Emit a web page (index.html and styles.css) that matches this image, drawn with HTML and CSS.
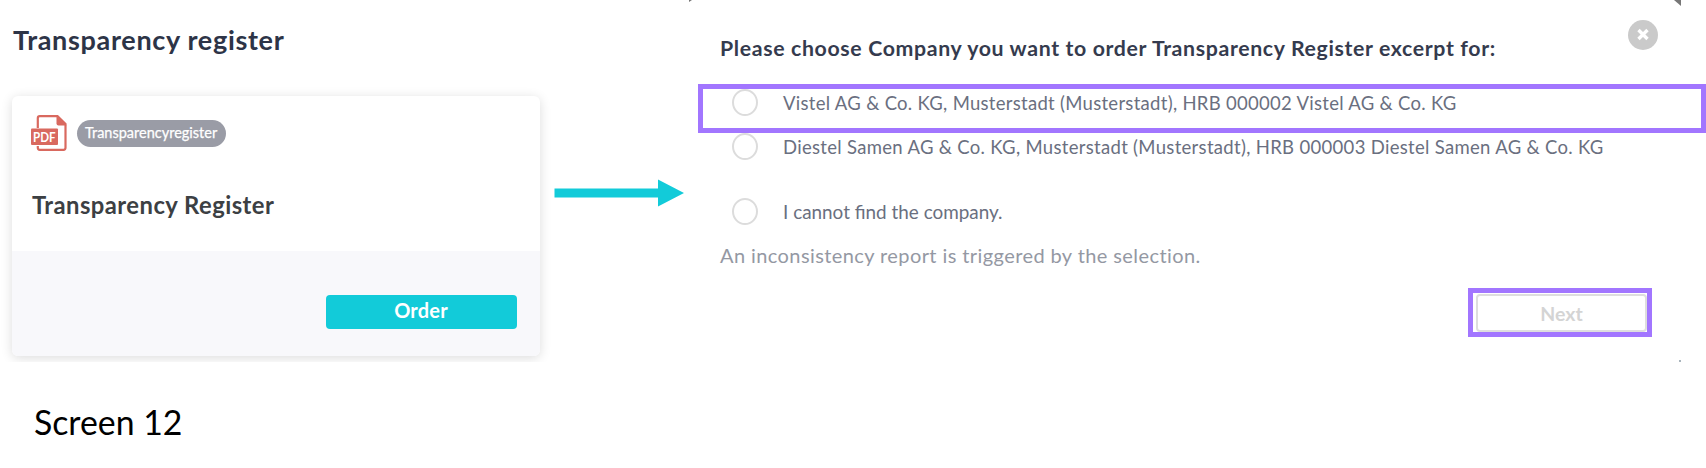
FILE: index.html
```html
<!DOCTYPE html>
<html lang="en">
<head>
<meta charset="utf-8">
<title>Transparency register</title>
<link rel="stylesheet" href="styles.css">
</head>
<body>
<main class="board">
  <section class="register">
    <h1 class="register-title">Transparency register</h1>
    <div class="card-clip">
      <article class="card">
        <div class="card-body">
          <div class="card-tags">
            <svg class="pdf-icon" viewBox="0 0 36 36">
              <path d="M6.800 13V3.200Q6.800 1.200 8.800 1.200H26.500L34.500 9V32.800Q34.500 34.800 32.500 34.800H8.800Q6.800 34.800 6.800 32.800V31" fill="none" stroke="#d9695f" stroke-width="2.200"/>
              <path d="M25.500 1V8.500Q25.500 10.500 27.500 10.500H35.500Z" fill="#d9695f"/>
              <rect x="0" y="13.500" width="27" height="16.500" rx="1" fill="#d9695f"/>
              <text class="pdf-text" x="2" y="26.500" textLength="22.500" lengthAdjust="spacingAndGlyphs">PDF</text>
            </svg>
            <span class="badge">Transparencyregister</span>
          </div>
          <h2 class="card-title">Transparency Register</h2>
        </div>
        <div class="card-footer"><button class="order">Order</button></div>
      </article>
    </div>
    <p class="caption">Screen 12</p>
  </section>
  <svg class="arrow" viewBox="0 0 130 28"><path d="M0.500 9.500H104V0.500L130 14L104 27.500V18.500H0.500Z" fill="#12cbd9"/></svg>
  <section class="dialog">
    <i class="corner corner-left"></i><i class="corner corner-right"></i><i class="corner corner-bottom"></i>
    <header class="dialog-head">
      <h2 class="dialog-title">Please choose Company you want to order Transparency Register excerpt for:</h2>
      <svg class="close" viewBox="0 0 30 30"><circle cx="15" cy="15" r="15" fill="#cacaca"/><path d="M10.500 10L19.500 19M19.500 10L10.500 19" stroke="#fff" stroke-width="3.400"/></svg>
    </header>
    <label class="option highlighted"><i class="radio"></i><span>Vistel AG &amp; Co. KG, Musterstadt (Musterstadt), HRB 000002 Vistel AG &amp; Co. KG</span></label>
    <label class="option second"><i class="radio"></i><span>Diestel Samen AG &amp; Co. KG, Musterstadt (Musterstadt), HRB 000003 Diestel Samen AG &amp; Co. KG</span></label>
    <label class="option third"><i class="radio"></i><span>I cannot find the company.</span></label>
    <p class="note">An inconsistency report is triggered by the selection.</p>
    <div class="next-frame"><button class="next">Next</button></div>
  </section>
</main>
</body>
</html>
```
FILE: styles.css
```css
* { box-sizing: border-box; }
body { margin: 0; background: #fff; font-family: Lato, "Noto Sans", sans-serif; }
h1, h2, p { margin: 0; }
button { font-family: inherit; padding: 0; }
.board { display: flex; width: 1706px; height: 468px; overflow: hidden; }
.register { width: 554px; }
.register-title { height: 82px; padding: 24px 0 0 13px; font-size: 27px; letter-spacing: .68px; line-height: 32px; color: #2d3447; white-space: nowrap; }
.card-clip { height: 280px; padding: 14px 0 0 12px; overflow: hidden; }
.card { width: 528px; height: 260px; border-radius: 6px; background: #fff; box-shadow: 0 2px 12px rgba(0, 0, 0, .14); overflow: hidden; }
.card-body { height: 155px; padding: 19px 19px 0; }
.card-tags { display: flex; align-items: center; gap: 10px; height: 36px; }
.pdf-icon { width: 36px; height: 36px; }
.pdf-text { font: bold 13px Lato, sans-serif; fill: #fff; }
.badge { width: 149px; height: 27px; margin-top: 1px; border-radius: 14px; padding-left: 8px; background: #9a9ca6; color: #fff; font-size: 14.500px; line-height: 25px; white-space: nowrap; -webkit-text-stroke: .25px #fff; }
.card-title { margin-top: 38px; padding-left: 1px; font-size: 23.800px; letter-spacing: .46px; line-height: 32px; color: #3c4043; }
.card-footer { display: flex; justify-content: flex-end; height: 105px; padding: 44px 23px 0 0; background: #f8f8fb; }
.order { width: 191px; height: 34px; border: 0; border-radius: 4px; background: #12cbd9; color: #fff; font-size: 20px; letter-spacing: .2px; font-weight: 700; line-height: 28px; padding: 0 1px 5px 0; }
.caption { padding: 40px 0 0 34px; font-size: 33.800px; line-height: 40px; color: #000; }
.arrow { width: 130px; height: 28px; margin-top: 179px; flex: none; }
.dialog { position: relative; width: 1022px; padding-left: 14px; }
.dialog-head { display: flex; justify-content: space-between; height: 84px; padding: 20px 48px 0 22px; }
.dialog-title { width: 860px; padding-top: 12px; font-size: 21.300px; letter-spacing: .64px; line-height: 33px; color: #353b4e; white-space: nowrap; }
.close { width: 30px; height: 30px; }
.option { display: flex; height: 27px; padding-left: 34px; font-size: 18.500px; letter-spacing: .29px; line-height: 28px; color: #6a6f80; white-space: nowrap; }
.radio { width: 26px; height: 27px; margin-right: 25px; border: 2px solid #dcdcdc; border-radius: 50%; flex: none; }
.highlighted { height: 49px; padding-left: 29px; border: 5px solid #a276ff; }
.second { letter-spacing: .31px; }
.third { margin-top: 38px; font-size: 18.900px; letter-spacing: 0; }
.note { margin-top: 14px; padding-left: 22px; font-size: 20px; letter-spacing: .41px; line-height: 32px; color: #9498a3; }
.next-frame { width: 184px; height: 49px; margin: 17px 0 0 770px; padding: 1px 3px 0; border: 5px solid #a276ff; }
.next { width: 171px; height: 38px; padding-top: 1px; border: 2px solid #dedede; border-radius: 4px; background: #fff; color: #d4d4d4; font-size: 19.500px; font-weight: 700; }
.corner { position: absolute; background: #777; }
.corner-left { left: 5px; top: 0; width: 3px; height: 2px; clip-path: polygon(0 0, 100% 0, 0 100%); }
.corner-right { left: 990px; top: 0; width: 7px; height: 6px; clip-path: polygon(0 0, 100% 0, 100% 100%); }
.corner-bottom { left: 995px; top: 360px; width: 2px; height: 2px; background: #a9b5bd; }
```
